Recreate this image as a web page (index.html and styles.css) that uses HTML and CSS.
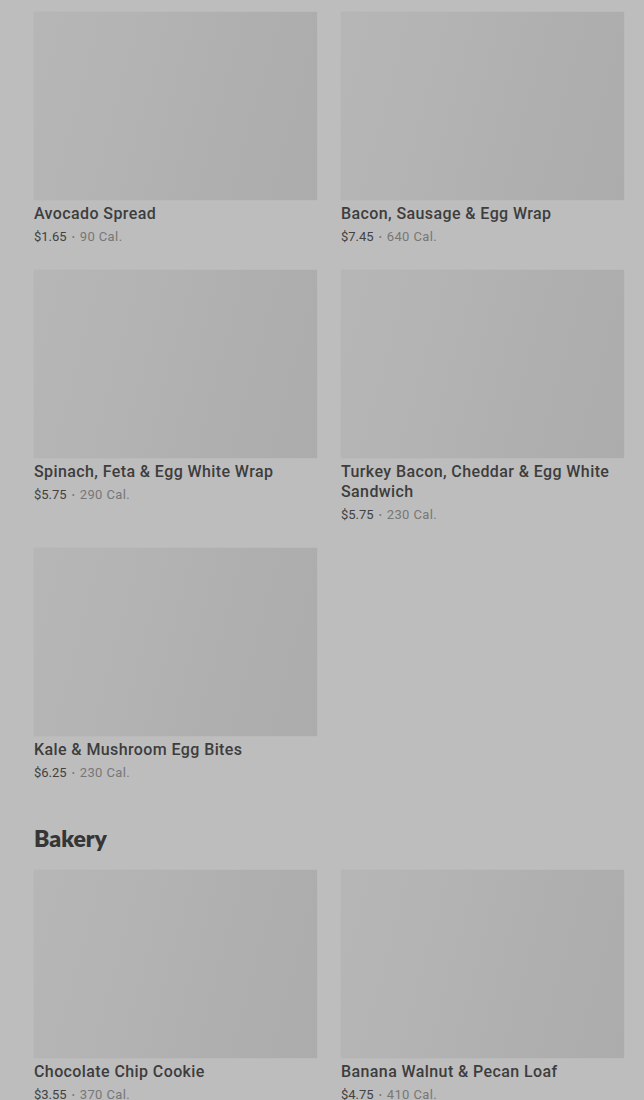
FILE: index.html
```html
<!DOCTYPE html>
<html>
<head>
<meta charset="utf-8">
<link rel="stylesheet" href="styles.css">
</head>
<body>
<div class="page">
  <section class="grid">
    <div class="card"><div class="img"></div><div class="name">Avocado Spread</div><div class="meta"><span class="price">$1.65</span><span class="dot">•</span><span class="cal">90 Cal.</span></div></div>
    <div class="card"><div class="img"></div><div class="name">Bacon, Sausage &amp; Egg Wrap</div><div class="meta"><span class="price">$7.45</span><span class="dot">•</span><span class="cal">640 Cal.</span></div></div>
    <div class="card"><div class="img"></div><div class="name">Spinach, Feta &amp; Egg White Wrap</div><div class="meta"><span class="price">$5.75</span><span class="dot">•</span><span class="cal">290 Cal.</span></div></div>
    <div class="card"><div class="img"></div><div class="name">Turkey Bacon, Cheddar &amp; Egg White Sandwich</div><div class="meta"><span class="price">$5.75</span><span class="dot">•</span><span class="cal">230 Cal.</span></div></div>
    <div class="card"><div class="img"></div><div class="name">Kale &amp; Mushroom Egg Bites</div><div class="meta"><span class="price">$6.25</span><span class="dot">•</span><span class="cal">230 Cal.</span></div></div>
  </section>
  <h2 class="heading">Bakery</h2>
  <section class="grid">
    <div class="card"><div class="img"></div><div class="name">Chocolate Chip Cookie</div><div class="meta"><span class="price">$3.55</span><span class="dot">•</span><span class="cal">370 Cal.</span></div></div>
    <div class="card"><div class="img"></div><div class="name">Banana Walnut &amp; Pecan Loaf</div><div class="meta"><span class="price">$4.75</span><span class="dot">•</span><span class="cal">410 Cal.</span></div></div>
  </section>
</div>
</body>
</html>
```

FILE: styles.css
```css
html, body {
  margin: 0;
  padding: 0;
  background: #bdbdbd;
}
body {
  font-family: "Roboto", "Liberation Sans", sans-serif;
  color: #3a3a3a;
  height: 1100px;
  overflow: hidden;
}
.page {
  padding: 12px 20px 0 34px;
}
.grid {
  display: grid;
  grid-template-columns: 283px 283px;
  column-gap: 24px;
  row-gap: 23px;
  align-items: start;
}
.card {
  display: flex;
  flex-direction: column;
}
.img {
  height: 188px;
  background: linear-gradient(105deg, #b6b6b6 0%, #b3b3b3 35%, #afafaf 65%, #acacac 100%);
  box-shadow: 0 0 1px rgba(0,0,0,0.08);
  margin-bottom: 4px;
}
.name {
  font-family: "Roboto", "Liberation Sans", sans-serif;
  font-weight: 500;
  font-size: 16px;
  line-height: 20px;
  color: #3d3d3d;
  letter-spacing: 0.4px;
}
.meta {
  font-family: "Roboto", "Liberation Sans", sans-serif;
  font-size: 13px;
  line-height: 20px;
  margin-top: 3px;
  display: flex;
  gap: 5px;
  align-items: center;
}
.price {
  color: #424242;
}
.dot {
  color: #777;
  font-size: 9px;
}
.cal {
  color: #777;
  letter-spacing: 0.4px;
}
.heading {
  font-family: "Lato", "Liberation Sans", sans-serif;
  font-weight: 800;
  font-size: 23px;
  line-height: 28px;
  color: #363636;
  margin: 41px 0 18px 0;
}
```
